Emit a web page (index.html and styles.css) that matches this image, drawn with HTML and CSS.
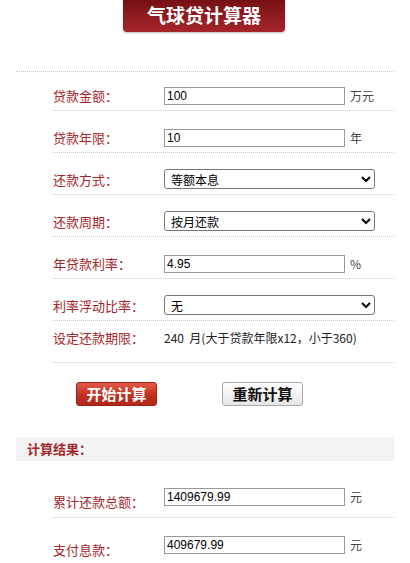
FILE: index.html
```html
<!DOCTYPE html>
<html lang="zh-CN">
<head>
<meta charset="utf-8">
<title>气球贷计算器</title>
<link rel="stylesheet" href="styles.css">
</head>
<body>
<div class="page">
  <div class="banner-wrap"><div class="banner">气球贷计算器</div></div>
  <div class="form">
    <div class="row row-first">
      <span class="label">贷款金额：</span>
      <input class="txt" type="text" value="100">
      <span class="unit">万元</span>
    </div>
    <div class="row">
      <span class="label">贷款年限：</span>
      <input class="txt" type="text" value="10">
      <span class="unit">年</span>
    </div>
    <div class="row">
      <span class="label">还款方式：</span>
      <select class="sel"><option>等额本息</option></select>
    </div>
    <div class="row">
      <span class="label">还款周期：</span>
      <select class="sel"><option>按月还款</option></select>
    </div>
    <div class="row">
      <span class="label">年贷款利率：</span>
      <input class="txt" type="text" value="4.95">
      <span class="unit">%</span>
    </div>
    <div class="row">
      <span class="label">利率浮动比率：</span>
      <select class="sel"><option>无</option></select>
    </div>
    <div class="row row-text">
      <span class="label">设定还款期限：</span>
      <span class="period">240&nbsp;&nbsp;月(大于贷款年限x12，小于360)</span>
    </div>
  </div>
  <div class="actions">
    <button class="btn btn-start" type="button">开始计算</button>
    <button class="btn btn-reset" type="button">重新计算</button>
  </div>
  <div class="result-head">计算结果：</div>
  <div class="results">
    <div class="res-row">
      <span class="label res-label">累计还款总额：</span>
      <input class="txt" type="text" value="1409679.99">
      <span class="unit">元</span>
    </div>
    <div class="res-row">
      <span class="label res-label">支付息款：</span>
      <input class="txt" type="text" value="409679.99">
      <span class="unit">元</span>
    </div>
  </div>
</div>
</body>
</html>
```
FILE: styles.css
```css
* { box-sizing: border-box; }
html, body { margin: 0; padding: 0; background: #fff; }
body {
  font-family: "Noto Sans CJK SC", "Liberation Sans", sans-serif;
  font-size: 12px;
  color: #333;
}
.page { padding: 0 16px; width: 410px; }

.banner-wrap { display: flex; justify-content: center; padding-right: 2px; }
.banner {
  width: 162px;
  height: 32px;
  background: linear-gradient(#761015, #a6252b);
  border-radius: 0 0 4px 4px;
  color: #fff;
  font-weight: bold;
  font-size: 19px;
  line-height: 29px;
  text-align: center;
  box-shadow: 0 1px 2px rgba(0,0,0,0.25);
}

.form {
  margin-top: 39px;
  border-top: 1px dotted #ccc;
}
.row {
  display: flex;
  align-items: flex-end;
  height: 42px;
  padding-bottom: 5px;
  margin-left: 37px;
  border-bottom: 1px dotted #ccc;
}
.row-first { height: 39px; }
.row-text { align-items: center; padding-bottom: 7px; }

.label {
  width: 111px;
  flex: none;
  color: #a2282d;
  font-size: 13px;
  line-height: 18px;
}
.txt {
  width: 181px;
  height: 18px;
  border: 1px solid #999;
  padding: 0 2px;
  margin: 0;
  font-family: "Liberation Sans", "Noto Sans CJK SC", sans-serif;
  font-size: 12px;
  color: #000;
  outline: none;
}
.unit {
  margin-left: 5px;
  line-height: 18px;
  font-size: 12px;
  color: #444;
}
.sel {
  width: 211px;
  height: 20px;
  margin: 0;
  font-family: "Noto Sans CJK SC", "Liberation Sans", sans-serif;
  font-size: 12px;
  color: #000;
  border: 1px solid #767676;
  border-radius: 3px;
  background: #fff;
  padding: 0 2px;
}
.period {
  color: #222;
  font-size: 12px;
  line-height: 18px;
}

.actions {
  display: flex;
  padding: 19px 0 0 60px;
  height: 74px;
}
.btn {
  width: 81px;
  height: 24px;
  padding: 0;
  margin: 0;
  font-family: "Noto Sans CJK SC", sans-serif;
  font-weight: bold;
  border-radius: 3px;
  line-height: 20px;
}
.btn-start {
  background: linear-gradient(#e35a48, #c2301f 55%, #b02818);
  border: 1px solid #982216;
  color: #fff;
  font-size: 15px;
}
.btn-reset {
  margin-left: 65px;
  background: linear-gradient(#ffffff, #e6e6e6);
  border: 1px solid #aaa;
  color: #111;
  font-size: 15px;
}

.result-head {
  height: 24px;
  background: #f3f3f3;
  color: #a2282d;
  font-weight: bold;
  font-size: 13px;
  line-height: 24px;
  padding-left: 11px;
  margin-bottom: 9px;
}
.res-row {
  display: flex;
  align-items: flex-start;
  margin-left: 37px;
  padding: 18px 0 6px;
  border-bottom: 1px dotted #ccc;
}
.res-label { margin-top: 5px; }
```
